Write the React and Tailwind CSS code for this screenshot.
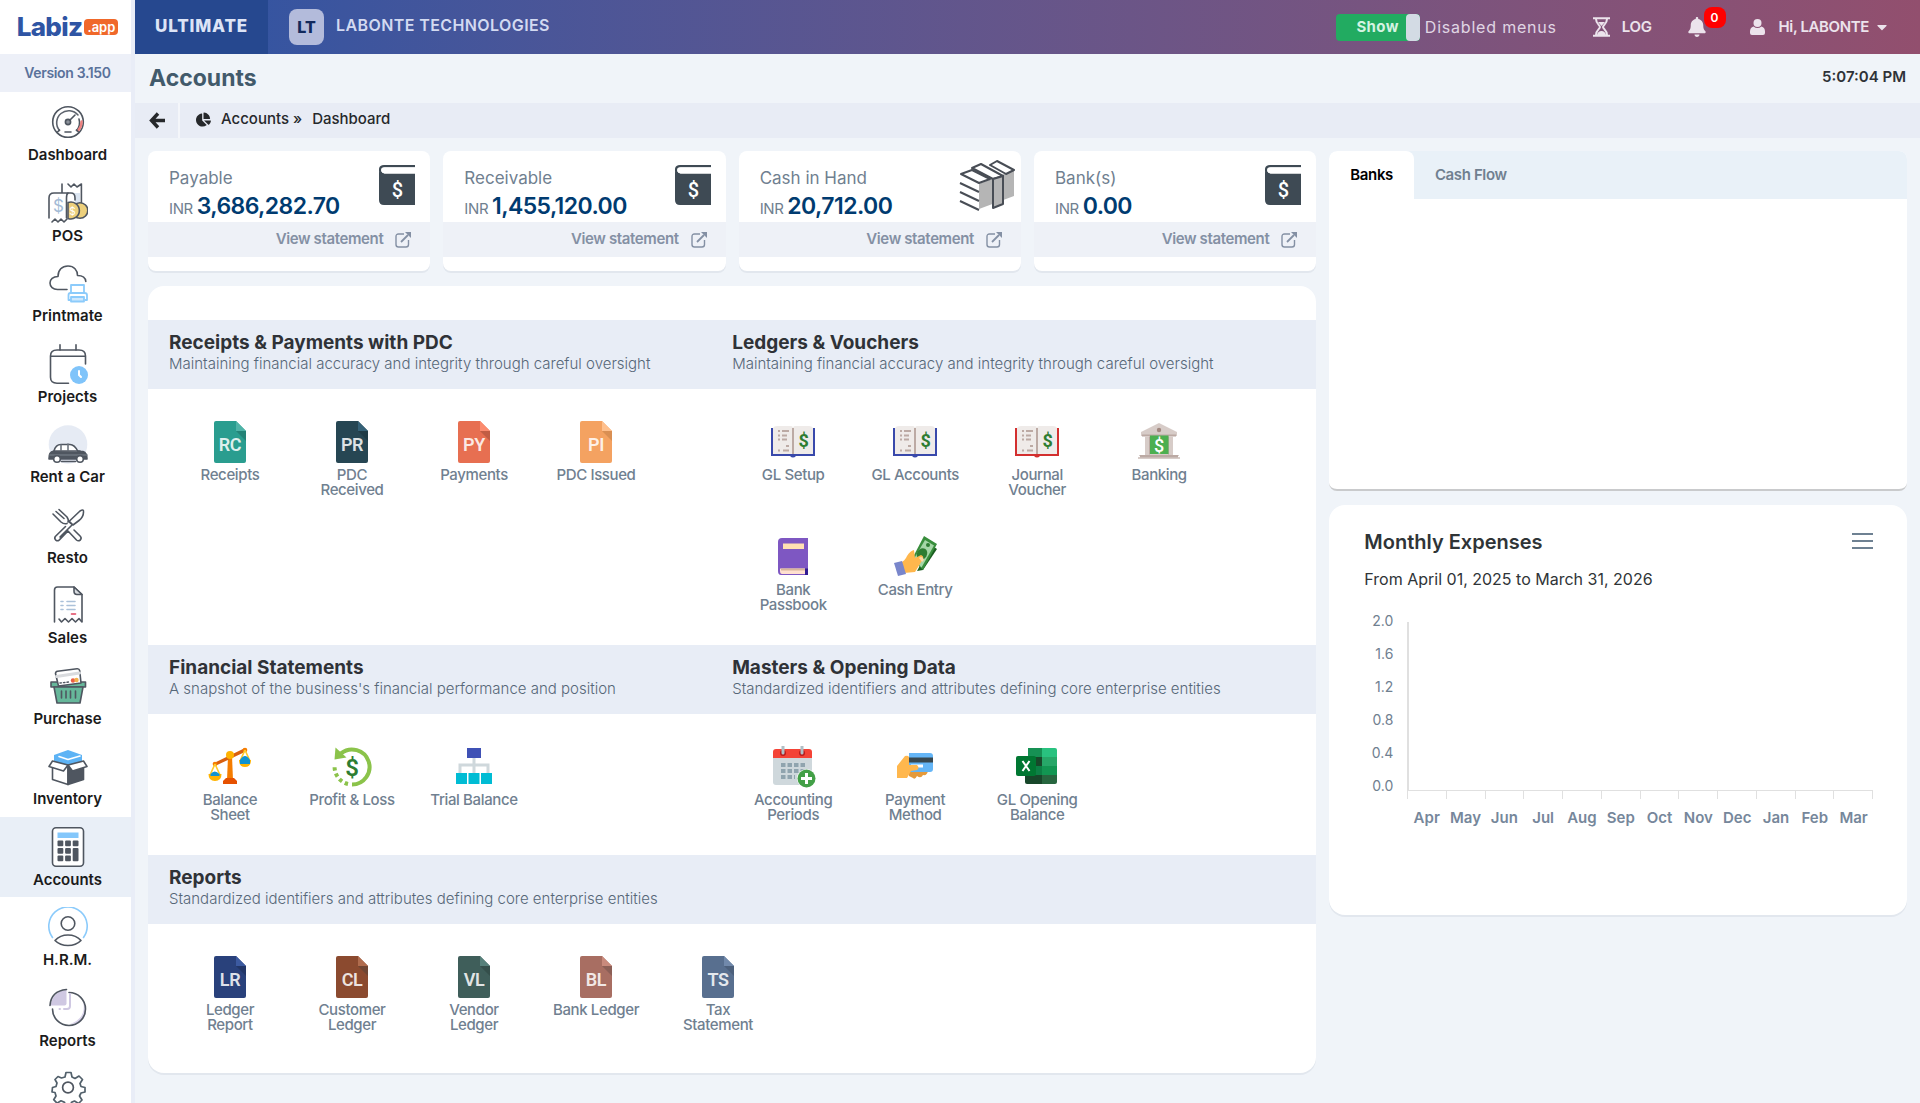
import { useState } from "react";
import { FaBell, FaCaretDown, FaChartPie } from "react-icons/fa";

const INK = "#4f5660";
const MONTHS = ["Apr", "May", "Jun", "Jul", "Aug", "Sep", "Oct", "Nov", "Dec", "Jan", "Feb", "Mar"];
const Y_LABELS = ["2.0", "1.6", "1.2", "0.8", "0.4", "0.0"];

/* ---------- sidebar icons ---------- */

function MenuSvg({ children }) {
  return (
    <svg
      className="h-10 w-10"
      viewBox="0 0 40 40"
      fill="none"
      stroke={INK}
      strokeWidth="1.6"
      strokeLinecap="round"
      strokeLinejoin="round"
      aria-hidden="true"
    >
      {children}
    </svg>
  );
}

const GaugeIcon = () => (
  <MenuSvg>
    <circle cx="20" cy="20" r="15.3" />
    <path d="M11.5 28.5A12 12 0 1 1 30 13" stroke="#5d636d" />
    <path d="M31 17a12 12 0 0 1-2.5 11.5" stroke={INK} />
    <path d="M33.6 19.5a13.6 13.6 0 0 1-3.4 9" stroke="#ee8280" strokeWidth="2.4" />
    <circle cx="20" cy="20" r="2.6" fill="#8d939c" />
    <path d="M22 18l5-5M17 30h6" />
    <path d="M9.5 30l2-2M30.5 30l-2-2" />
  </MenuSvg>
);

const PosIcon = () => (
  <MenuSvg>
    <path d="M17 10h7q3 0 3 4v6h5V10" fill="#dbe5f1" stroke="none" />
    <path d="M14 1v9M33.4 1v19M20 1l3 3 3-3 3 3 4.4-3" />
    <path d="M1 35V15q0-5 5-5h14q-1.5 1-1.5 5v20" fill="#fff" />
    <path d="M20 10h3q4 0 4 5v2" />
    <path d="M4 39l3-3 3 3 3-3 3 3 3-3" />
    <circle cx="32" cy="27.5" r="7.8" fill="#edd07c" />
    <path d="M20 19.5a8.5 8.5 0 1 1 0 16z" fill="#edd07c" />
    <text x="10.5" y="29" textAnchor="middle" fontSize="17" fontFamily="Inter, sans-serif" fill="#a3bbd6" stroke="none">$</text>
    <text x="24.5" y="31.5" textAnchor="middle" fontSize="10" fontFamily="Inter, sans-serif" fill="#fff" stroke="none">$</text>
  </MenuSvg>
);

const PrintmateIcon = () => (
  <MenuSvg>
    <path d="M19 26.5H9.5C5 26.5 2 23.5 2 20s3-6.5 8-6.5C10 7 14 3 20 3s9.5 4 9.5 9.5c5 0 8 2.5 8.3 6" />
    <g stroke="#8ccbfb" strokeWidth="1.8" fill="#fff">
      <path d="M23 30V22h13v8" />
      <path d="M22 37h-1.5v-5q0-2 2-2h14q2.5 0 2.5 2v5h-1.5" />
      <path d="M23 34h13v4.5H23z" fill="#cfe8fd" />
    </g>
  </MenuSvg>
);

const ProjectsIcon = () => (
  <MenuSvg>
    <path d="M12 .8V6M28 .8V6M3 12.3h34" />
    <path d="M20.5 39.2H9q-6.5 0-6.5-6V12q0-6 6.5-6h22q6.5 0 6.5 6v8" />
    <circle cx="31" cy="31" r="9" fill="#80c4fa" stroke="none" />
    <path d="M31 27v4l2 2" stroke="#fff" strokeWidth="2" />
  </MenuSvg>
);

const CarIcon = () => (
  <MenuSvg>
    <circle cx="20" cy="20.5" r="19.3" fill="#e6ebf4" stroke="none" />
    <path d="M1 35c0-5 1-7 5-8l29 .5c3 1 4 3 4 7.5z" fill={INK} />
    <path d="M6 27c1-4 3-6.5 7-6.5h9c4 0 6 3 8 7" fill="#fff" />
    <path d="M13 21v5M20 20v6M2 31h37" stroke="#6e757f" />
    <path d="M7 27h25" />
    <circle cx="9" cy="35" r="3.3" fill="#fff" />
    <circle cx="32" cy="35" r="3.3" fill="#fff" />
    <path d="M13.5 37.5h14" />
  </MenuSvg>
);

const RestoIcon = () => (
  <MenuSvg>
    <path d="M5 9l8 8q3 2.5 6 1.5M8 6.5l8 7M11 4.5l8 7.5q2 3 1 5M21 17l2.5 2" />
    <path d="M22 15.5L32 6q4-2.5 3.5 1 0 5-4.5 8.5l-6 4.5-4-4" />
    <path d="M17.5 21.5L7.3 31.5q-1.3 2 .5 3.6 1.7 1.3 3.3 0L20 26l8.5 9q1.8 1.5 3.8 0 1.7-2 0-3.7L26 25M24 20l-12 12" />
  </MenuSvg>
);

const SalesIcon = () => (
  <MenuSvg>
    <path d="M6.5 37V5q0-3 3-3H26l8 7.5V37" />
    <path d="M26 2v4q0 3.5 3 3.5h5z" fill="#d9dce0" />
    <path d="M11 34l2.5 3 3.5-3.5 3.5 3.5 3.5-3.5 3.5 3.5 3.5-3.5 2.5 3" />
    <path d="M13 16.5h2M13 20.5h2M13 24.5h2M19 16.5h8M19 20.5h8M19 24.5h8" stroke="#abc1d9" />
    <path d="M23.5 29h4" stroke="#e0435f" />
  </MenuSvg>
);

const PurchaseIcon = () => (
  <MenuSvg>
    <path d="M3 16h34.5v5H3z" fill="#66b79a" />
    <path d="M6 21h29l-3 16H9z" fill="#66b79a" />
    <path d="M7.5 7.5q0-2 2-2.3L29 2.7q2.3-.2 2.7 2L33 17l-22.5 3z" fill="#fff" />
    <path d="M8.5 10.5l23-3.5" stroke="#d9dbde" strokeWidth="3" />
    <path d="M12 17l9-1" strokeWidth="1.4" strokeDasharray="1.5 2" />
    <circle cx="25" cy="14.5" r="2.2" fill="#ec5f45" stroke="none" />
    <circle cx="28.5" cy="14" r="2.2" fill="#f4b14b" stroke="none" />
    <path d="M13.5 25v7M18 25v7M22.5 25v7M27.5 25v7" />
  </MenuSvg>
);

const InventoryIcon = () => (
  <MenuSvg>
    <path d="M6 9l14-5 14 5v8l-14 5-14-5z" fill="#5db3f5" stroke="none" />
    <path d="M11 10.5l9 3 12-3.5" stroke="#fff" />
    <path d="M4.5 18v15.5L20 38.5V20z" fill="#fff" />
    <path d="M35.5 18v15.5L20 38.5V20z" fill={INK} />
    <path d="M4.5 15L20 19l-4.5 6L1 20.5z" fill="#fff" />
    <path d="M35.5 15L20 19l4.5 6L39 20.5z" fill="#fff" />
  </MenuSvg>
);

const AccountsIcon = () => (
  <MenuSvg>
    <rect x="4.5" y=".8" width="31" height="38.4" rx="3.5" fill="#fff" />
    <rect x="9.5" y="5.5" width="21" height="5.5" fill="#84c7fb" stroke="none" />
    <g fill={INK} stroke="none">
      <rect x="9.5" y="13.5" width="5.8" height="5.8" rx="1" />
      <rect x="17.1" y="13.5" width="5.8" height="5.8" rx="1" />
      <rect x="24.7" y="13.5" width="5.8" height="5.8" rx="1" />
      <rect x="9.5" y="21" width="5.8" height="5.8" rx="1" />
      <rect x="17.1" y="21" width="5.8" height="5.8" rx="1" />
      <rect x="9.5" y="28.5" width="5.8" height="5.8" rx="1" />
      <rect x="17.1" y="28.5" width="5.8" height="5.8" rx="1" />
      <rect x="24.7" y="21" width="5.8" height="13.3" rx="1" />
    </g>
  </MenuSvg>
);

const HrmIcon = () => (
  <MenuSvg>
    <path d="M4.5 30.5a19.2 19.2 0 1 1 31 0" stroke="#8ccbfb" />
    <circle cx="20" cy="16.5" r="6.8" />
    <path d="M7 33.5q5-5.5 13-5.5t13 5.5q-5 5-13 5t-13-5z" />
  </MenuSvg>
);

const ReportsIcon = () => (
  <MenuSvg>
    <path d="M35 13q4 17-13 23 20-.5 14.5-20z" fill="#d9d3ea" stroke="none" />
    <path d="M21 4.5A16.5 16.5 0 1 1 4.5 21" />
    <path d="M18.5 2Q5 3 2.5 17.5h14q2 0 2-2z" fill="#cfc8e2" stroke="none" />
    <path d="M2 17.5Q3 3 18.5 1.5" />
    <path d="M22 6v12q0 3-3 3h-3M12 21h-.5" stroke="#cfc8e2" strokeWidth="2" />
  </MenuSvg>
);

const SettingsIcon = () => (
  <MenuSvg>
    <g strokeWidth="1.7">
      <path d="M17 9l1-4.500h5l1 4.500 3 1.500 4-2.500 3.500 3.500-2.500 4 1 3 4 1v4.500l-4 1-1.500 3 2.500 4-3.500 3.500-4-2.500-3 1.300-1 4.200h-5l-1-4.200-3.500-1.500-4 2.400-3.300-3.500 2.300-3.700-1-3.500-3-.5 .5-4.500 3.500-1 1-3.500-2-3.500 3-3 3.500 1.500z" stroke="#52606b" />
      <circle cx="20" cy="19.5" r="5.4" />
    </g>
  </MenuSvg>
);

/* ---------- shortcut icons ---------- */

function AppSvg({ children }) {
  return (
    <svg className="h-[42px] w-12" viewBox="0 0 48 42" fill="none" aria-hidden="true">
      {children}
    </svg>
  );
}

function FileIcon({ code, fill, fold, shade }) {
  return (
    <AppSvg>
      <path d="M10 0h20l10 10v30q0 2-2 2H10q-2 0-2-2V2q0-2 2-2z" fill={fill} />
      <path d="M30 10l10 10V10z" fill={shade} />
      <path d="M30 0l10 10H30z" fill={fold} />
      <text x="24" y="29.8" textAnchor="middle" fontSize="18" fontWeight="600" fontFamily="Roboto, sans-serif" fill="#fff" fillOpacity=".85">
        {code}
      </text>
    </AppSvg>
  );
}

function LedgerIcon({ cover }) {
  return (
    <AppSvg>
      <path d="M2 7h44v28H27q-3 3-6 0H2z" fill={cover} />
      <path d="M4 7q1-2 4-2h14q2 0 2 2v26H4zM44 7q-1-2-4-2H26q-2 0-2 2v26h20z" fill="#efebe9" />
      <path d="M23 7h2v26h-2z" fill="#bcaaa4" />
      <path d="M9 10h2M13 10h7M9 14.5h2M13 14.5h5M9 18.5h2M13 18.5h5M17 25h3M9 29.5h2M14 29.5h6" stroke="#bcaaa4" strokeWidth="2" />
      <text x="34.5" y="25.5" textAnchor="middle" fontSize="18" fontWeight="700" fontFamily="Roboto, sans-serif" fill="#2e7d32">$</text>
    </AppSvg>
  );
}

const BankIcon = () => (
  <AppSvg>
    <path d="M24 2l18 9v4H6v-4z" fill="#d7ccc8" />
    <circle cx="24" cy="9" r="2.2" fill="#a1887f" />
    <path d="M7 13.5h34v2H7z" fill="#bcaaa4" />
    <path d="M10 15.5h28V34H10z" fill="#d7ccc8" />
    <path d="M14 15.5h1v18h-1zM33 15.5h1v18h-1z" fill="#bcaaa4" />
    <path d="M15 14.5h18.5V33H15z" fill="#4caf50" />
    <path d="M4 34h40v1H4zM3 36h42v2H3z" fill="#d7ccc8" />
    <path d="M5 34h38v2.5H5z" fill="#bcaaa4" />
    <text x="24" y="31" textAnchor="middle" fontSize="18" fontFamily="Roboto, sans-serif" fill="#fff">$</text>
  </AppSvg>
);

const PassbookIcon = () => (
  <AppSvg>
    <path d="M13 2h26v37H12q-3 0-3-4V6q0-4 4-4z" fill="#7e57c2" />
    <path d="M14 7.5h21V13H14z" fill="#ffe0b2" />
    <path d="M11 32.5h25V38H13q-2 0-2-3z" fill="#ffe0cf" />
    <path d="M12 32.5h24v2H12z" fill="#d7b49a" />
    <path d="M36 32.5h3V39h-3z" fill="#311b92" />
  </AppSvg>
);

const CashEntryIcon = () => (
  <AppSvg>
    <path d="M46 13L32 34l-6 1L40 9z" fill="#1b5e20" />
    <path d="M33 0l13 8-14 26-11-11z" fill="#388e3c" />
    <path d="M34 4l9 5.5-12.5 22-8-8z" fill="#a5d6a7" />
    <ellipse cx="31" cy="18" rx="5" ry="6" fill="#2e7d32" transform="rotate(30 31 18)" />
    <circle cx="37" cy="9" r="2" fill="#2e7d32" />
    <path d="M9 27q5-2 7-7 3-5 7-6l1 8 6-3q3 1 2 4l-8 13-11 1z" fill="#ffb74d" />
    <path d="M28 22q2-2 4 0t-1 4z" fill="#ffd9a8" />
    <path d="M3 27l8-2 4 13-8 2z" fill="#7986cb" />
  </AppSvg>
);

const BalanceIcon = () => (
  <AppSvg>
    <path d="M22 10h4l1 24h-6z" fill="#f57c00" />
    <path d="M17 35l3-3h8l3 3v3H17z" fill="#e65100" />
    <path d="M8 17L39 2l2 3L9 20z" fill="#d9600f" />
    <circle cx="24" cy="9" r="4" fill="#ffb300" />
    <circle cx="9" cy="18" r="2.3" fill="#f57c00" />
    <circle cx="39" cy="4" r="2.3" fill="#f57c00" />
    <path d="M9 18L4 29M9 18l5 11M39 4l-5 11M39 4l5 11" stroke="#ffca28" strokeWidth="1.6" />
    <path d="M2.5 28h13q0 7-6.5 7t-6.5-7zM33 14h12q0 7-6 7t-6-7z" fill="#ffb300" />
    <path d="M4.5 28q4-5 9 0v2h-9zM34 14q5-8 10 0v4H34z" fill="#0f93d0" />
  </AppSvg>
);

const ProfitIcon = () => (
  <AppSvg>
    <path d="M13 7.4A17.5 17.5 0 1 1 24 38.5" stroke="#8bc34a" strokeWidth="4" />
    <path d="M20 38A17.5 17.5 0 0 1 6.7 19" stroke="#8bc34a" strokeWidth="4" strokeDasharray="3.5 3" />
    <path d="M7.5 1.5L6.5 13.5l12-2z" fill="#8bc34a" />
    <text x="24" y="29.5" textAnchor="middle" fontSize="24" fontWeight="600" fontFamily="Roboto, sans-serif" fill="#2e7d32">$</text>
  </AppSvg>
);

const TrialIcon = () => (
  <AppSvg>
    <path d="M24 11v16M10 27v-8h28v8" stroke="#cfd8dc" strokeWidth="3" />
    <path d="M17 2h14v10H17z" fill="#3f51b5" />
    <path d="M6 27h11v11H6zM18.5 27h11v11h-11zM31 27h11v11H31z" fill="#00bcd4" />
  </AppSvg>
);

const PeriodsIcon = () => (
  <AppSvg>
    <path d="M4 11h39v25q0 3-3 3H7q-3 0-3-3z" fill="#cfd8dc" />
    <path d="M4 12V6q0-3 3-3h33q3 0 3 3v6z" fill="#f44336" />
    <circle cx="14" cy="7" r="3" fill="#b71c1c" />
    <circle cx="33" cy="7" r="3" fill="#b71c1c" />
    <path d="M14 0v7M33 0v7" stroke="#b0bec5" strokeWidth="3" strokeLinecap="round" />
    <path d="M12 19h24M12 25h24M12 31h14" stroke="#90a4ae" strokeWidth="4" strokeDasharray="4.5 2" />
    <circle cx="37.5" cy="32.5" r="9.5" fill="#fff" />
    <circle cx="37.5" cy="32.5" r="9" fill="#43a047" />
    <path d="M37.5 27v11M32 32.5h11" stroke="#fff" strokeWidth="3" />
  </AppSvg>
);

const PaymentMethodIcon = () => (
  <AppSvg>
    <path d="M18 30l4 2q2 2 4-2 4 3 6-1 4 1 5-4l-8-8-12 8z" fill="#e59a3a" />
    <path d="M18 7h21q3 0 3 3v13q0 3-3 3H18z" fill="#64b5f6" />
    <path d="M18 11.5h24v5H18z" fill="#37474f" />
    <path d="M20 18.5h12v3H20z" fill="#fff" />
    <path d="M6 32V20l8-10q3-1 4 1v8h8q3 3 0 5l-6 1-4 7z" fill="#ffb74d" />
  </AppSvg>
);

const ExcelIcon = () => (
  <AppSvg>
    <path d="M15 2h14v9H15z" fill="#169154" />
    <path d="M29 2h13q2 0 2 2v7H29z" fill="#29c27f" />
    <path d="M15 11h14v9H15z" fill="#18482a" />
    <path d="M29 11h15v9H29z" fill="#27a768" />
    <path d="M15 20h14v9H15z" fill="#0c8045" />
    <path d="M29 20h15v9H29z" fill="#129652" />
    <path d="M12 29h17v9H14q-2 0-2-2z" fill="#17472a" />
    <path d="M29 29h15v7q0 2-2 2H29z" fill="#27663f" />
    <rect x="3" y="10" width="20" height="20" rx="2" fill="#007732" />
    <path d="M9.5 15l7 10M16.5 15l-7 10" stroke="#fff" strokeWidth="2" />
  </AppSvg>
);

/* ---------- summary icons ---------- */

const BookIcon = () => (
  <svg className="mt-3.5 mr-[15px] h-10 w-9" viewBox="0 0 36 40" fill="none" aria-hidden="true">
    <path d="M36 1.2H5Q1 1.2 1 5t4 4" stroke="#3e4a54" strokeWidth="2.2" />
    <path d="M0 5q0 3.5 5 3.5h31V40H5q-5 0-5-5z" fill="#3e4a54" />
    <path d="M36 2.5H6q-3.5 0-3.5 3T6 8.5h30z" fill="#fff" />
    <text x="18.5" y="31.5" textAnchor="middle" fontSize="20" fontWeight="500" fontFamily="Roboto, sans-serif" fill="#fff">$</text>
  </svg>
);

const CashStackIcon = () => (
  <svg className="mt-2 mr-1.5 h-[52px] w-14" viewBox="0 0 56 52" fill="none" stroke="#484d55" strokeWidth="2" strokeLinejoin="round" aria-hidden="true">
    <path d="M20 25l35-14v26L20 50z" fill="#b5b5b5" stroke="none" />
    <path d="M20 24L2 15l11-4 18 9z" fill="#fff" />
    <path d="M31 6l7-4 17 9-8 4z" fill="#fff" />
    <path d="M13 9l9-4 22 12-10 3z" fill="#fff" />
    <path d="M34 20l10-3v28l-10 4z" fill="#b5b5b5" />
    <path d="M1 24l19 9M1 33l19 9M1 42l19 9" />
  </svg>
);

const OpenIcon = () => (
  <svg className="h-4 w-4" viewBox="0 0 16 16" fill="none" stroke="currentColor" strokeWidth="1.4" aria-hidden="true">
    <path d="M9 2H3.5Q1 2 1 4.5v8Q1 15 3.5 15H11q2.5 0 2.5-2.5V8" />
    <path d="M6 10l7-7" strokeWidth="1.8" />
    <path d="M10 0h6v6z" fill="currentColor" stroke="none" />
  </svg>
);

/* ---------- data ---------- */

const menu = [
  { label: "Dashboard", Icon: GaugeIcon },
  { label: "POS", Icon: PosIcon },
  { label: "Printmate", Icon: PrintmateIcon },
  { label: "Projects", Icon: ProjectsIcon },
  { label: "Rent a Car", Icon: CarIcon },
  { label: "Resto", Icon: RestoIcon },
  { label: "Sales", Icon: SalesIcon },
  { label: "Purchase", Icon: PurchaseIcon },
  { label: "Inventory", Icon: InventoryIcon },
  { label: "Accounts", Icon: AccountsIcon, active: true },
  { label: "H.R.M.", Icon: HrmIcon },
  { label: "Reports", Icon: ReportsIcon },
  { label: "Settings", Icon: SettingsIcon, iconOnly: true },
];

const summary = [
  { label: "Payable", amount: "3,686,282.70", Icon: BookIcon },
  { label: "Receivable", amount: "1,455,120.00", Icon: BookIcon },
  { label: "Cash in Hand", amount: "20,712.00", Icon: CashStackIcon },
  { label: "Bank(s)", amount: "0.00", Icon: BookIcon },
];

const rows = [
  [
    {
      title: "Receipts & Payments with PDC",
      note: "Maintaining financial accuracy and integrity through careful oversight",
      items: [
        { label: "Receipts", icon: <FileIcon code="RC" fill="#2a9d8f" fold="#4fb3a7" shade="#238377" /> },
        { label: "PDC Received", icon: <FileIcon code="PR" fill="#264653" fold="#356177" shade="#203b46" /> },
        { label: "Payments", icon: <FileIcon code="PY" fill="#e76f51" fold="#fb8b6f" shade="#c15d44" /> },
        { label: "PDC Issued", icon: <FileIcon code="PI" fill="#f4a261" fold="#ffc08d" shade="#d98f53" /> },
      ],
    },
    {
      title: "Ledgers & Vouchers",
      note: "Maintaining financial accuracy and integrity through careful oversight",
      items: [
        { label: "GL Setup", icon: <LedgerIcon cover="#3949ab" /> },
        { label: "GL Accounts", icon: <LedgerIcon cover="#3949ab" /> },
        { label: "Journal Voucher", icon: <LedgerIcon cover="#d32f2f" /> },
        { label: "Banking", icon: <BankIcon /> },
        { label: "Bank Passbook", icon: <PassbookIcon /> },
        { label: "Cash Entry", icon: <CashEntryIcon /> },
      ],
    },
  ],
  [
    {
      title: "Financial Statements",
      note: "A snapshot of the business's financial performance and position",
      items: [
        { label: "Balance Sheet", icon: <BalanceIcon /> },
        { label: "Profit & Loss", icon: <ProfitIcon /> },
        { label: "Trial Balance", icon: <TrialIcon /> },
      ],
    },
    {
      title: "Masters & Opening Data",
      note: "Standardized identifiers and attributes defining core enterprise entities",
      items: [
        { label: "Accounting Periods", icon: <PeriodsIcon /> },
        { label: "Payment Method", icon: <PaymentMethodIcon /> },
        { label: "GL Opening Balance", icon: <ExcelIcon /> },
      ],
    },
  ],
  [
    {
      title: "Reports",
      note: "Standardized identifiers and attributes defining core enterprise entities",
      items: [
        { label: "Ledger Report", icon: <FileIcon code="LR" fill="#29417b" fold="#3c5aa0" shade="#223667" /> },
        { label: "Customer Ledger", icon: <FileIcon code="CL" fill="#8b4a2f" fold="#b06c4e" shade="#6f4634" /> },
        { label: "Vendor Ledger", icon: <FileIcon code="VL" fill="#3f5e5a" fold="#56807a" shade="#354f4b" /> },
        { label: "Bank Ledger", icon: <FileIcon code="BL" fill="#a86e62" fold="#c98a7c" shade="#8c5f56" /> },
        { label: "Tax Statement", icon: <FileIcon code="TS" fill="#586f8f" fold="#7189ab" shade="#4c607c" /> },
      ],
    },
  ],
];

/* ---------- page parts ---------- */

function Sidebar() {
  return (
    <aside className="flex h-screen w-[135px] shrink-0 flex-col overflow-hidden border-r-4 border-[#e9edf7] bg-white">
      <a href="#home" className="flex h-[54px] shrink-0 items-center justify-center gap-0.5 pl-1" aria-label="Labiz.app">
        <span className="text-[26px] leading-6 font-extrabold tracking-tight text-[#2f55a4]">Labiz</span>
        <span className="rounded bg-[#f0682a] px-[3px] text-[13px] leading-4 font-semibold text-white">.app</span>
      </a>
      <div className="flex h-[38px] shrink-0 items-center justify-center bg-[#edf0f8] pl-1 text-sm font-semibold tracking-tight text-[#5a729b]">
        Version 3.150
      </div>
      <nav className="grid h-[1047px] shrink-0 auto-rows-fr">
        {menu.map(({ label, Icon, active, iconOnly }) => (
          <a
            key={label}
            href={`#${label}`}
            aria-label={label}
            className={`flex flex-col items-center pt-2.5 pl-1 ${active ? "bg-[#e9eff7]" : ""}`}
          >
            <Icon />
            {!iconOnly && (
              <span className="mt-[3px] text-[15px] leading-5 font-semibold text-[#1b1b1b]">{label}</span>
            )}
          </a>
        ))}
      </nav>
    </aside>
  );
}

function Header() {
  const [showDisabled, setShowDisabled] = useState(true);

  return (
    <header className="flex h-[54px] items-center bg-linear-to-r from-[#2b54a4] to-[#924f6e] text-white">
      <span className="flex h-full items-center bg-[#26488f] px-5 text-[17px] font-extrabold tracking-wider text-[#dde4f6]">
        ULTIMATE
      </span>
      <span className="ml-[21px] flex h-9 w-[35px] items-center justify-center rounded-lg bg-[#b3bbdb] text-base font-extrabold text-[#12295c]">
        LT
      </span>
      <span className="ml-3 pb-1 text-base font-semibold tracking-wide text-[#d3daf1]">LABONTE TECHNOLOGIES</span>

      <label className="ml-auto flex cursor-pointer items-center gap-[5px]">
        <input
          type="checkbox"
          className="sr-only"
          checked={showDisabled}
          onChange={(e) => setShowDisabled(e.target.checked)}
        />
        <span
          className={`flex h-[27px] w-[84px] items-center justify-end overflow-hidden rounded-sm ${
            showDisabled ? "bg-[#22ab61]" : "bg-slate-500"
          }`}
        >
          <span className="mr-[7px] text-[15px] font-bold tracking-wide text-[#d5f3e2]">
            {showDisabled ? "Show" : "Hide"}
          </span>
          <span className="h-full w-3.5 rounded-sm bg-[#d3dbe4]" />
        </span>
        <span className="text-base tracking-wider text-[#e0d6e4]">Disabled menus</span>
      </label>

      <button className="ml-9 flex items-center gap-3 text-[15px] font-semibold tracking-tight text-[#ece3ec]">
        <svg className="h-5 w-[17px]" viewBox="0 0 17 20" fill="none" stroke="currentColor" strokeWidth="2" aria-hidden="true">
          <path d="M0 1.3h17M0 18.7h17M3 2c0 5 4 6 4 8s-4 3-4 8M14 2c0 5-4 6-4 8s4 3 4 8" />
          <path d="M5 5h7l-3.5 4zM4 18q1-4 4.5-4t4.5 4z" fill="currentColor" stroke="none" />
        </svg>
        LOG
      </button>
      <button className="relative ml-9 text-[#ece3ec]" aria-label="Notifications">
        <FaBell className="h-5 w-[18px]" />
        <span className="absolute -top-2.5 left-4 flex h-[21px] w-[22px] items-center justify-center rounded-lg bg-[#ff0000] text-xs font-semibold text-white">
          0
        </span>
      </button>
      <button className="mr-8 ml-11 flex items-center gap-3.5 text-[15px] font-semibold tracking-tight text-[#ece3ec]">
        <svg className="h-4 w-[15px]" viewBox="0 0 15 16" fill="currentColor" aria-hidden="true">
          <circle cx="7.5" cy="4" r="4" />
          <path d="M3.5 7.5q4 3 8 0 3.5 1 3.5 5v1.5q0 2-2 2H2q-2 0-2-2v-1.5q0-4 3.5-5z" />
        </svg>
        <span className="flex items-center gap-[7px]">
          Hi, LABONTE
          <FaCaretDown className="h-4 w-3" />
        </span>
      </button>
    </header>
  );
}

function SummaryCard({ label, amount, Icon }) {
  return (
    <div className="h-[120px] rounded-lg bg-white shadow-[0_2px_0_#e2e7ee]">
      <div className="flex h-[71px] justify-between pl-[21px]">
        <div className="pt-[15px]">
          <p className="text-[17px] leading-6 text-[#708090]">{label}</p>
          <p className="text-[15px] leading-[34px] tracking-tight text-[#708090]">
            INR <span className="text-[23px] leading-8 font-semibold tracking-tight text-[#003b70]">{amount}</span>
          </p>
        </div>
        <Icon />
      </div>
      <a
        href="#statement"
        className="flex h-[35px] items-center justify-end gap-3 bg-[#eef1f7] pr-[19px] text-[15px] font-semibold tracking-tight text-[#8490a4]"
      >
        View statement
        <OpenIcon />
      </a>
    </div>
  );
}

function SectionRow({ sections }) {
  const cols = sections.length > 1 ? "grid-cols-2" : "grid-cols-1";

  return (
    <section>
      <div className={`grid h-[69px] bg-[#e8edf6] px-[21px] pt-3 ${cols}`}>
        {sections.map((s) => (
          <div key={s.title}>
            <h2 className="text-[19px] leading-[22px] font-bold text-[#2f3237]">{s.title}</h2>
            <p className="text-[15px] leading-5 font-light text-[#566778]">{s.note}</p>
          </div>
        ))}
      </div>
      <div className={`grid px-[21px] py-[13px] ${cols}`}>
        {sections.map((s) => (
          <ul key={s.title} className="flex flex-wrap">
            {s.items.map((item) => (
              <li key={item.label} className="h-[115px] w-[122px] pt-[19px]">
                <a
                  href={`#${item.label}`}
                  className="mx-auto flex w-24 flex-col items-center gap-1 text-center text-[15px] leading-[15px] font-medium tracking-tight text-[#708090]"
                >
                  {item.icon}
                  {item.label}
                </a>
              </li>
            ))}
          </ul>
        ))}
      </div>
    </section>
  );
}

function BankTabs() {
  const [tab, setTab] = useState("Banks");

  return (
    <div className="h-[340px] overflow-hidden rounded-lg border-b-2 border-[#c9cacc] bg-white">
      <div role="tablist" className="flex h-12 bg-[#e9f1f8]">
        {["Banks", "Cash Flow"].map((name) => (
          <button
            key={name}
            role="tab"
            aria-selected={tab === name}
            onClick={() => setTab(name)}
            className={`rounded-t-lg px-[21px] text-[15px] font-semibold tracking-tight ${
              tab === name ? "bg-white text-black" : "text-[#708090]"
            }`}
          >
            {name}
          </button>
        ))}
      </div>
    </div>
  );
}

function ExpensesChart() {
  return (
    <div className="h-[410px] rounded-2xl bg-white pt-6 pr-[34px] pl-[35px] shadow-[0_2px_0_#e2e7ee]">
      <div className="flex items-center justify-between">
        <h2 className="text-xl leading-[26px] font-semibold text-[#2f3437]">Monthly Expenses</h2>
        <button aria-label="Chart menu" className="flex w-[21px] flex-col gap-[5px] pb-0.5">
          <span className="h-0.5 bg-[#6e8192]" />
          <span className="h-0.5 bg-[#6e8192]" />
          <span className="h-0.5 bg-[#6e8192]" />
        </button>
      </div>
      <p className="mt-3 text-base leading-6 text-[#2f3437]">From April 01, 2025 to March 31, 2026</p>
      <div className="mt-[21px] flex">
        <div className="w-[43px] shrink-0 pr-3.5">
          {Y_LABELS.map((y) => (
            <p key={y} className="h-[33px] text-right text-sm leading-[18px] text-[#708090]">
              {y}
            </p>
          ))}
        </div>
        <div className="flex-1 pt-2.5">
          <div className="h-[169px] border-b border-l-2 border-[#e0e0e0]" />
          <div className="grid grid-cols-12 border-r border-[#e0e0e0]">
            {MONTHS.map((m) => (
              <div key={m} className="h-2 border-l border-[#e0e0e0]" />
            ))}
          </div>
          <div className="mt-[9px] grid grid-cols-12">
            {MONTHS.map((m) => (
              <span key={m} className="text-center text-[15px] leading-5 font-semibold text-[#76879b]">
                {m}
              </span>
            ))}
          </div>
        </div>
      </div>
    </div>
  );
}

export default function App() {
  return (
    <div className="flex min-h-screen bg-[#f0f4f9] font-[Inter,sans-serif]">
      <Sidebar />
      <div className="min-w-0 flex-1">
        <Header />
        <div className="flex h-[49px] items-center justify-between px-3.5 pb-0.5">
          <h1 className="text-[23px] leading-[30px] font-bold text-[#425a6b]">Accounts</h1>
          <time className="text-[15px] font-semibold text-[#2f3237]">5:07:04 PM</time>
        </div>
        <div className="flex h-[35px] items-center bg-[#e8ecf5] text-[#26282b]">
          <button aria-label="Back" className="flex h-full w-[45px] items-center justify-center border-r-2 border-[#f4f6fa]">
            <svg className="h-[17px] w-4" viewBox="0 0 16 17" fill="none" stroke="currentColor" strokeWidth="3.4" aria-hidden="true">
              <path d="M9 1.5L2.5 8.5 9 15.5M3 8.5h13" />
            </svg>
          </button>
          <nav className="flex items-center pb-0.5 pl-4 text-[15px] font-medium">
            <FaChartPie className="mr-2.5 h-[15px] w-[15px]" />
            <a href="#accounts">Accounts</a>
            <span className="mr-2.5 ml-1">»</span>
            <a href="#dashboard">Dashboard</a>
          </nav>
        </div>
        <main className="grid grid-cols-3 items-start gap-[13px] p-[13px]">
          <div className="col-span-2">
            <div className="grid grid-cols-4 gap-[13px]">
              {summary.map((card) => (
                <SummaryCard key={card.label} {...card} />
              ))}
            </div>
            <div className="mt-[15px] overflow-hidden rounded-2xl bg-white pt-[34px] pb-2 shadow-[0_2px_0_#e2e7ee]">
              {rows.map((sections) => (
                <SectionRow key={sections[0].title} sections={sections} />
              ))}
            </div>
          </div>
          <div className="flex flex-col gap-3.5">
            <BankTabs />
            <ExpensesChart />
          </div>
        </main>
      </div>
    </div>
  );
}
